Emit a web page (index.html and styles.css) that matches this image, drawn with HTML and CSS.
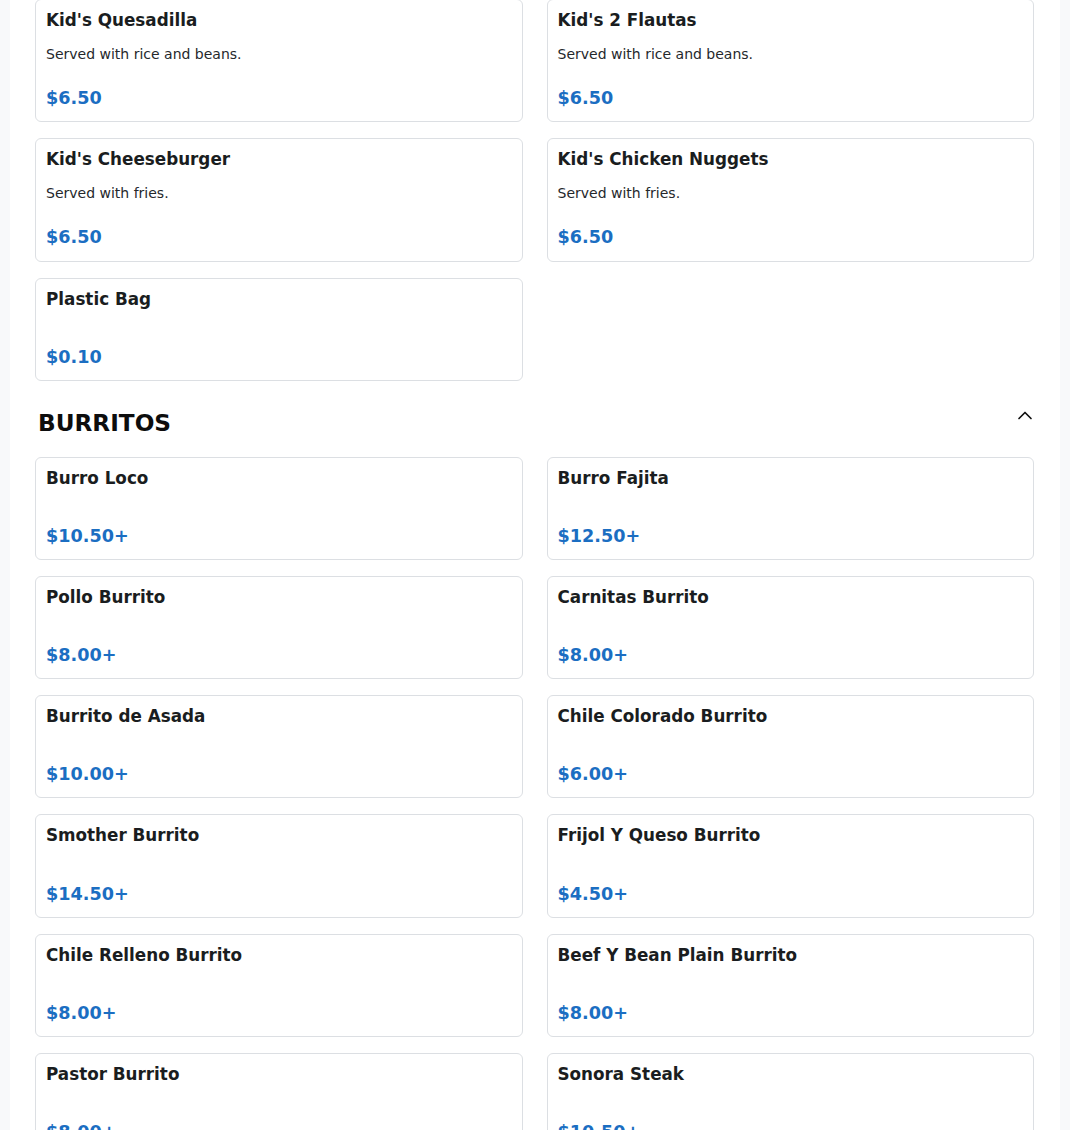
FILE: index.html
```html
<!DOCTYPE html>
<html lang="en">
<head>
<meta charset="utf-8">
<title>Menu</title>
<link rel="stylesheet" href="styles.css">
</head>
<body>
<main class="panel">
  <section class="section first">
    <div class="grid">
      <div class="card">
        <h3 class="card-title">Kid's Quesadilla</h3>
        <p class="card-desc">Served with rice and beans.</p>
        <div class="card-price">$6.50</div>
      </div>
      <div class="card">
        <h3 class="card-title">Kid's 2 Flautas</h3>
        <p class="card-desc">Served with rice and beans.</p>
        <div class="card-price">$6.50</div>
      </div>
      <div class="card">
        <h3 class="card-title">Kid's Cheeseburger</h3>
        <p class="card-desc">Served with fries.</p>
        <div class="card-price">$6.50</div>
      </div>
      <div class="card">
        <h3 class="card-title">Kid's Chicken Nuggets</h3>
        <p class="card-desc">Served with fries.</p>
        <div class="card-price">$6.50</div>
      </div>
      <div class="card">
        <h3 class="card-title">Plastic Bag</h3>
        <div class="card-price">$0.10</div>
      </div>
    </div>
  </section>

  <section class="section">
    <div class="section-head">
      <h2 class="section-title">BURRITOS</h2>
      <svg class="chevron" width="16" height="16" viewBox="0 0 16 16" aria-hidden="true">
        <path d="M2 10.5 L8 4.5 L14 10.5" fill="none" stroke="#111" stroke-width="1.7" stroke-linecap="round" stroke-linejoin="round"/>
      </svg>
    </div>
    <div class="grid">
      <div class="card">
        <h3 class="card-title">Burro Loco</h3>
        <div class="card-price">$10.50+</div>
      </div>
      <div class="card">
        <h3 class="card-title">Burro Fajita</h3>
        <div class="card-price">$12.50+</div>
      </div>
      <div class="card">
        <h3 class="card-title">Pollo Burrito</h3>
        <div class="card-price">$8.00+</div>
      </div>
      <div class="card">
        <h3 class="card-title">Carnitas Burrito</h3>
        <div class="card-price">$8.00+</div>
      </div>
      <div class="card">
        <h3 class="card-title">Burrito de Asada</h3>
        <div class="card-price">$10.00+</div>
      </div>
      <div class="card">
        <h3 class="card-title">Chile Colorado Burrito</h3>
        <div class="card-price">$6.00+</div>
      </div>
      <div class="card">
        <h3 class="card-title">Smother Burrito</h3>
        <div class="card-price">$14.50+</div>
      </div>
      <div class="card">
        <h3 class="card-title">Frijol Y Queso Burrito</h3>
        <div class="card-price">$4.50+</div>
      </div>
      <div class="card">
        <h3 class="card-title">Chile Relleno Burrito</h3>
        <div class="card-price">$8.00+</div>
      </div>
      <div class="card">
        <h3 class="card-title">Beef Y Bean Plain Burrito</h3>
        <div class="card-price">$8.00+</div>
      </div>
      <div class="card">
        <h3 class="card-title">Pastor Burrito</h3>
        <div class="card-price">$8.00+</div>
      </div>
      <div class="card">
        <h3 class="card-title">Sonora Steak</h3>
        <div class="card-price">$10.50+</div>
      </div>
    </div>
  </section>
</main>
</body>
</html>
```

FILE: styles.css
```css
html, body {
  margin: 0;
  padding: 0;
}

body {
  background: #f8f9fa;
  font-family: "DejaVu Sans", "Liberation Sans", sans-serif;
  color: #212529;
}

.panel {
  margin: -1px 10px 0;
  padding: 0 26px 40px 25px;
  background: #ffffff;
}

.grid {
  display: grid;
  grid-template-columns: 1fr 1fr;
  column-gap: 24px;
  row-gap: 16px;
}

.card {
  display: flex;
  flex-direction: column;
  border: 1px solid #dcdfe3;
  border-radius: 6px;
  padding: 10px 10px 12px;
  background: #fff;
}

.card-title {
  margin: 0 0 14px;
  font-size: 16.8px;
  line-height: 1.2;
  font-weight: 700;
  color: #1a1d20;
}

.card-desc {
  margin: 0;
  font-size: 14px;
  line-height: 20px;
  color: #25282c;
}

.card-price {
  margin-top: 24px;
  font-size: 17.6px;
  line-height: 1.2;
  font-weight: 700;
  color: #1b6ec2;
}

.section-head {
  display: flex;
  justify-content: space-between;
  align-items: flex-start;
  margin: 28px 0 20px;
  padding: 0 1px 0 3px;
}

.section-title {
  margin: 0;
  font-size: 23.2px;
  line-height: 1.2;
  font-weight: 700;
  color: #0d0d0d;
}

.chevron {
  display: block;
  margin-top: -1px;
}
```
